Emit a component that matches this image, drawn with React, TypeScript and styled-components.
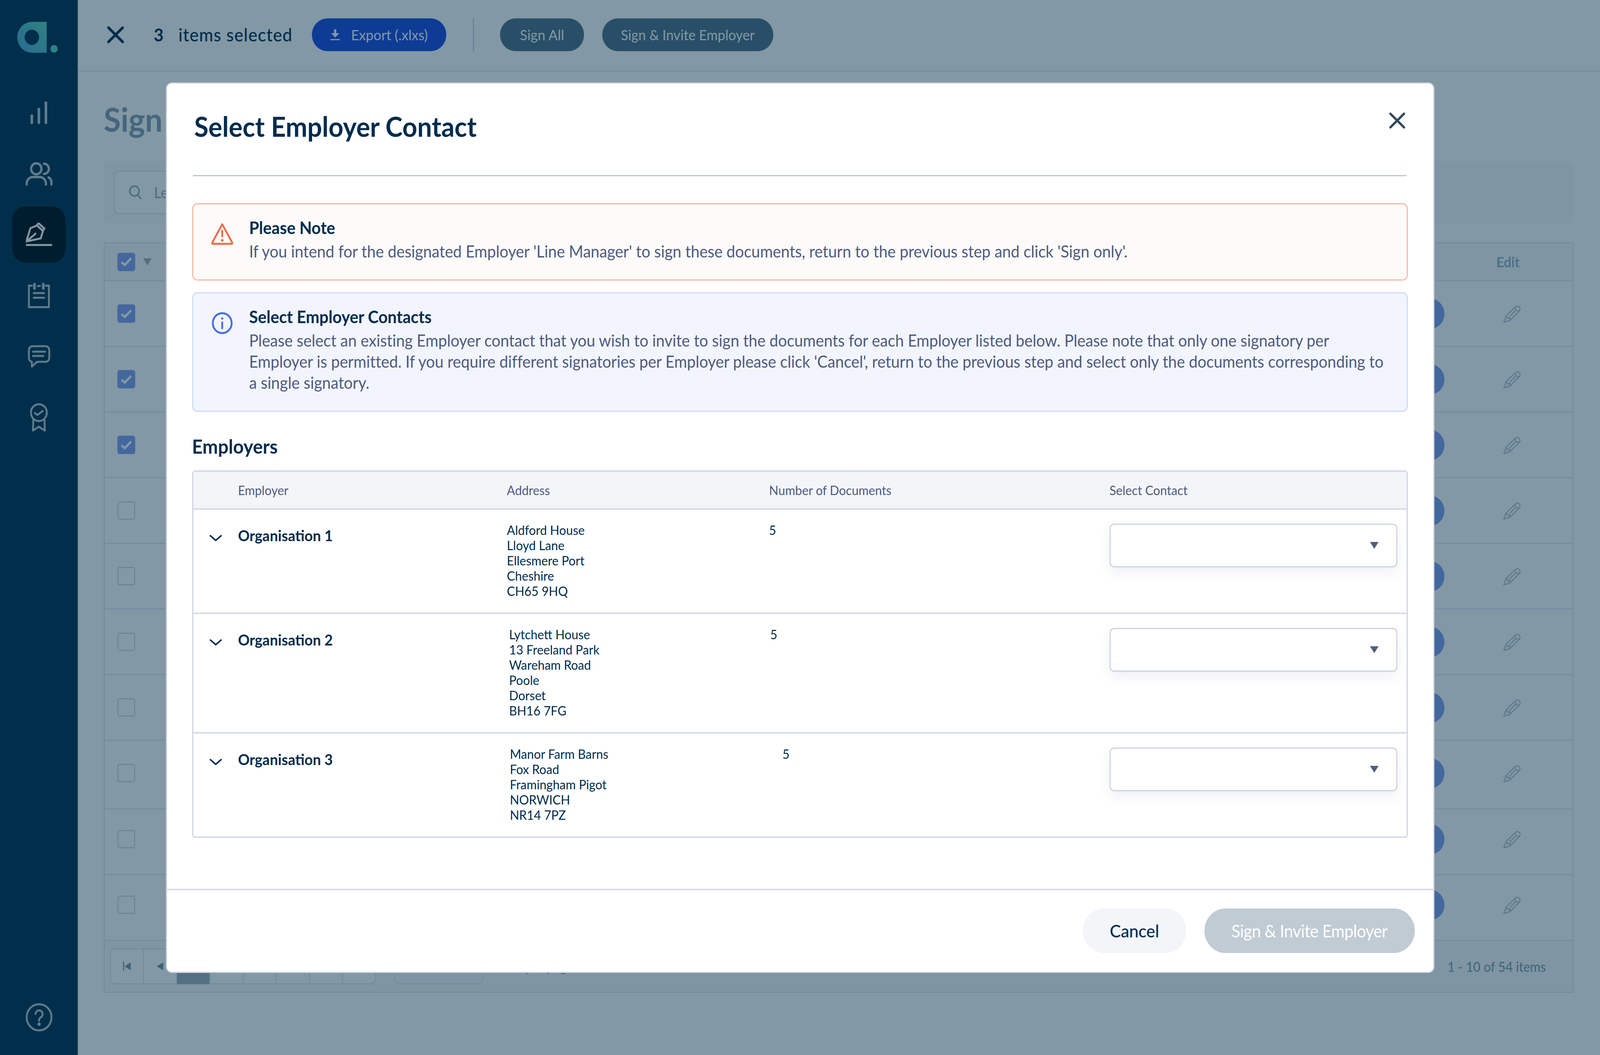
import React, { useLayoutEffect, useState } from "react";
import styled, { createGlobalStyle } from "styled-components";

const ink = "#002c4d";
const slate = "#4e5a7e";
const line = "#cdd3e3";
const shade = "#e2eaf3";
const faint = "#b8c4d3";
const sans = `Lato, "Noto Sans", sans-serif`;

const GlobalStyle = createGlobalStyle`
    html, body {
        margin: 0;
        padding: 0;
        overflow: hidden;
        background: #ffffff;
        font-family: ${sans};
    }
    * {
        box-sizing: border-box;
    }
`;

const Page = styled.div`
    position: relative;
    display: flex;
    width: 4320px;
    height: 2700px;
    overflow: hidden;
    background: #ffffff;
    transform-origin: 0 0;
`;

const Sidebar = styled.aside`
    display: flex;
    flex-direction: column;
    align-items: center;
    flex: 0 0 210px;
    background: #033250;
    padding: 56px 0 60px;
`;

const Logo = styled.svg`
    width: 111px;
    height: 79px;
    margin: 0 0 81px -8px;
`;

const NavList = styled.nav`
    display: flex;
    flex-direction: column;
    gap: 12px;
`;

const NavItem = styled.div<{ $active?: boolean }>`
    display: flex;
    align-items: center;
    justify-content: center;
    width: 144px;
    height: 144px;
    border-radius: 36px;
    color: ${(props) => (props.$active ? "#ffffff" : "#bac8d1")};
    background: ${(props) => (props.$active ? "#000e15" : "transparent")};
`;

const HelpIcon = styled.svg`
    width: 73px;
    height: 73px;
    margin-top: auto;
    color: #bac8d1;
`;

const Main = styled.main`
    display: flex;
    flex-direction: column;
    flex: 1;
    min-width: 0;
`;

const Topbar = styled.header`
    display: flex;
    align-items: center;
    height: 183px;
    padding: 0 0 3px 79px;
    border-bottom: 3px solid ${shade};
`;

const BarClose = styled.svg`
    width: 46px;
    height: 44px;
    margin-right: 80px;
    color: ${ink};
`;

const Count = styled.span`
    font-size: 46px;
    font-weight: 700;
    color: ${ink};
    margin-right: 40px;
`;

const Selected = styled.span`
    font-size: 46px;
    font-weight: 500;
    letter-spacing: 1.3px;
    color: ${ink};
    margin-right: 52px;
`;

const BarButton = styled.button<{ $primary?: boolean; $width: number }>`
    display: flex;
    align-items: center;
    justify-content: center;
    gap: 30px;
    width: ${(props) => props.$width}px;
    height: 84px;
    border: 0;
    border-radius: 42px;
    font-family: ${sans};
    font-size: 37px;
    color: #ffffff;
    background: ${(props) => (props.$primary ? "#1c4ce0" : "#507085")};
`;

const BarDivider = styled.span`
    width: 3px;
    height: 84px;
    margin: 0 70px 0 72px;
    background: #c6d2dd;
`;

const InviteButton = styled(BarButton)`
    margin-left: 49px;
    font-size: 36.4px;
`;

const Content = styled.div`
    display: flex;
    flex-direction: column;
    padding: 72px 71px 0 70px;
`;

const PageTitle = styled.h1`
    margin: 0 0 58px;
    font-size: 84px;
    line-height: 100px;
    font-weight: 700;
    color: #8a9eb1;
`;

const FilterCard = styled.div`
    height: 158px;
    padding: 23px 27px;
    margin-bottom: 49px;
    background: #f9fafc;
    border-radius: 10px;
`;

const SearchBox = styled.div`
    display: flex;
    align-items: center;
    gap: 34px;
    width: 1400px;
    height: 112px;
    padding-left: 38px;
    border: 3px solid ${shade};
    border-radius: 14px;
    background: #ffffff;
    font-size: 38px;
    color: #9aaab7;
`;

const BackTable = styled.section`
    display: flex;
    flex-direction: column;
    border: 3px solid ${shade};
`;

const BackHead = styled.div`
    display: flex;
    align-items: center;
    height: 97px;
    padding: 0 143px 0 34px;
    background: #f9fafc;
    border-bottom: 3px solid ${shade};
`;

const HeadCaret = styled.span`
    width: 24px;
    height: 19px;
    margin-left: 21px;
    background: #a6aebd;
    clip-path: polygon(0 0, 100% 0, 50% 100%);
`;

const EditLabel = styled.span`
    margin-left: auto;
    font-size: 36px;
    font-weight: 700;
    color: #9ab0c7;
`;

const BackRow = styled.div<{ $height: number; $lift: number }>`
    display: flex;
    align-items: center;
    height: ${(props) => props.$height}px;
    padding: 0 140px ${(props) => props.$lift}px 34px;
    border-bottom: 3px solid ${shade};
`;

const CheckBox = styled.span<{ $checked?: boolean }>`
    display: flex;
    align-items: center;
    justify-content: center;
    width: 48px;
    height: 47px;
    border-radius: 6px;
    color: #ffffff;
    background: ${(props) => (props.$checked ? "#86a0f1" : "transparent")};
    border: ${(props) => (props.$checked ? "0" : `3px solid #d4dae3`)};
`;

const Avatar = styled.span`
    width: 78px;
    height: 78px;
    margin-left: auto;
    margin-right: 159px;
    border-radius: 50%;
    background: #86a0f1;
`;

const Pencil = styled.svg`
    width: 47px;
    height: 46px;
    color: ${faint};
`;

const BackFooter = styled.div`
    display: flex;
    align-items: center;
    height: 130px;
    padding: 0 72px 0 13px;
    background: #f9fafc;
`;

const Pager = styled.div`
    display: flex;
    width: 720px;
    height: 92px;
    border: 3px solid ${shade};
    border-radius: 14px;
    background: #ffffff;
`;

const PagerCell = styled.span<{ $active?: boolean }>`
    display: flex;
    align-items: center;
    justify-content: center;
    flex: 1;
    margin: ${(props) => (props.$active ? "-3px 0" : "0")};
    border-right: 3px solid ${shade};
    background: ${(props) => (props.$active ? "#a6aebd" : "transparent")};
    color: #7a94a5;
    &:last-child {
        border-right: 0;
    }
`;

const SizeBox = styled.div`
    width: 241px;
    height: 92px;
    margin: 0 24px 0 48px;
    border: 3px solid ${shade};
    border-radius: 14px;
`;

const PerPage = styled.span`
    font-size: 34px;
    color: #7e94a5;
`;

const ItemTotal = styled.span`
    margin-left: auto;
    font-size: 34px;
    color: #7e94a5;
`;

const Overlay = styled.div`
    position: absolute;
    inset: 0;
    display: flex;
    align-items: center;
    justify-content: center;
    background: rgba(0, 44, 72, 0.49);
`;

const Modal = styled.div`
    display: flex;
    flex-direction: column;
    width: 3425px;
    height: 2279px;
    background: #ffffff;
    border: 3px solid ${line};
    border-radius: 16px;
`;

const ModalHeader = styled.div`
    display: flex;
    justify-content: space-between;
    align-items: flex-start;
    height: 237px;
    margin: 0 73px 0 70px;
    padding: 67px 3px 0 0;
    border-bottom: 3px solid #b9c6d3;
`;

const ModalTitle = styled.h2`
    margin: 0 0 0 4px;
    font-size: 70px;
    line-height: 84px;
    font-weight: 700;
    color: ${ink};
`;

const CloseIcon = styled.svg`
    width: 43px;
    height: 41px;
    margin-top: 7px;
    color: #33495a;
`;

const ModalBody = styled.div`
    display: flex;
    flex-direction: column;
    padding: 69px 69px 0 68px;
`;

const Alert = styled.div<{ $tone: "warn" | "info" }>`
    display: flex;
    align-items: flex-start;
    gap: 43px;
    padding: 31px 48px 0;
    border: 3px solid ${(props) => (props.$tone === "warn" ? "#f6b8a5" : "#cfdaf5")};
    border-radius: 14px;
    background: ${(props) => (props.$tone === "warn" ? "#fdfbf9" : "#f2f5fe")};
    height: ${(props) => (props.$tone === "warn" ? 198 : 306)}px;
    margin-bottom: 30px;
`;

const AlertIcon = styled.svg`
    flex: 0 0 60px;
    height: 56px;
    margin-top: 17px;
`;

const AlertText = styled.div`
    display: flex;
    flex-direction: column;
`;

const AlertTitle = styled.strong`
    font-size: 43.5px;
    line-height: 56px;
    font-weight: 700;
    color: ${ink};
`;

const AlertBody = styled.p`
    margin: 6px 0 0;
    font-size: 42px;
    line-height: 54px;
    letter-spacing: -0.08px;
    color: ${slate};
`;

const SectionTitle = styled.h3`
    margin: 28px 0 32px;
    font-size: 50px;
    line-height: 60px;
    font-weight: 700;
    color: ${ink};
`;

const EmployerTable = styled.div`
    display: flex;
    flex-direction: column;
    border: 3px solid ${line};
    border-radius: 8px;
`;

const columns = "121px 726px 708px 919px 1fr";

const EmployerHead = styled.div`
    display: grid;
    grid-template-columns: ${columns};
    align-items: center;
    height: 97px;
    background: #f3f5f9;
    border-bottom: 3px solid ${line};
    font-size: 33px;
    color: ${slate};
`;

const EmployerRow = styled.div`
    display: grid;
    grid-template-columns: ${columns};
    align-items: start;
    padding: 33px 0 36px;
    border-bottom: 3px solid ${line};
    &:last-child {
        border-bottom: 0;
    }
`;

const Chevron = styled.svg`
    width: 35px;
    height: 18px;
    margin: 31px 0 0 43px;
    color: ${ink};
`;

const OrgName = styled.div`
    margin-top: 9px;
    font-size: 39px;
    line-height: 48px;
    font-weight: 700;
    color: ${ink};
`;

const Address = styled.div<{ $offset: number }>`
    padding-left: ${(props) => props.$offset}px;
    font-size: 33px;
    line-height: 39px;
    color: ${ink};
`;

const DocCount = styled.div<{ $offset: number }>`
    padding-left: ${(props) => props.$offset}px;
    font-size: 33px;
    line-height: 39px;
    color: ${ink};
`;

const ContactSelect = styled.div`
    display: flex;
    align-items: center;
    justify-content: flex-end;
    width: 777px;
    height: 112px;
    margin-top: 3px;
    padding-right: 47px;
    background: #ffffff;
    border: 3px solid ${line};
    border-radius: 12px;
    box-shadow: 0 14px 30px rgba(60, 80, 130, 0.08);
`;

const SelectCaret = styled.span`
    width: 24px;
    height: 18px;
    background: #4e5f7e;
    clip-path: polygon(0 0, 100% 0, 50% 100%);
`;

const ModalFooter = styled.div`
    display: flex;
    align-items: center;
    justify-content: flex-end;
    gap: 49px;
    height: 212px;
    margin-top: auto;
    padding-right: 50px;
    border-top: 3px solid ${line};
`;

const FooterButton = styled.button<{ $disabled?: boolean; $width: number }>`
    width: ${(props) => props.$width}px;
    height: 114px;
    border: 0;
    border-radius: 57px;
    font-family: ${sans};
    font-size: ${(props) => (props.$disabled ? 44 : 45)}px;
    letter-spacing: ${(props) => (props.$disabled ? "-0.7px" : "0")};
    font-weight: ${(props) => (props.$disabled ? 400 : 500)};
    color: ${(props) => (props.$disabled ? "#ffffff" : ink)};
    background: ${(props) => (props.$disabled ? "#c0cbd4" : "#f3f5f9")};
`;

const organisations = [
    { name: "Organisation 1", lines: ["Aldford House", "Lloyd Lane", "Ellesmere Port", "Cheshire", "CH65 9HQ"], addressOffset: 0, docsOffset: 0 },
    { name: "Organisation 2", lines: ["Lytchett House", "13 Freeland Park", "Wareham Road", "Poole", "Dorset", "BH16 7FG"], addressOffset: 6, docsOffset: 3 },
    { name: "Organisation 3", lines: ["Manor Farm Barns", "Fox Road", "Framingham Pigot", "NORWICH", "NR14 7PZ"], addressOffset: 8, docsOffset: 36 },
];

// the last rows of the page behind sit a little lower than the rest
const backRows = [
    { checked: true, height: 168, lift: 0 },
    { checked: true, height: 168, lift: 0 },
    { checked: true, height: 168, lift: 0 },
    { checked: false, height: 168, lift: 0 },
    { checked: false, height: 168, lift: 0 },
    { checked: false, height: 168, lift: 0 },
    { checked: false, height: 168, lift: 0 },
    { checked: false, height: 176, lift: 8 },
    { checked: false, height: 168, lift: 14 },
    { checked: false, height: 168, lift: 14 },
];

// the design is 4320x2700, fit it to whatever window we actually get
const useFitToWindow = () => {
    const [fit, setFit] = useState({ x: 1, y: 1 });
    useLayoutEffect(() => {
        const measure = () => setFit({ x: window.innerWidth / 4320, y: window.innerHeight / 2700 });
        measure();
        window.addEventListener("resize", measure);
        return () => window.removeEventListener("resize", measure);
    }, []);
    return fit;
};

const Tick = () => (
    <svg width="30" height="24" viewBox="0 0 30 24" fill="none" stroke="currentColor" strokeWidth="6">
        <path d="M2 13 L11 20 L28 3" />
    </svg>
);

const PencilGlyph = () => (
    <Pencil viewBox="0 0 47 46" fill="none" stroke="currentColor" strokeWidth="3" strokeLinejoin="round">
        <path d="M8 28 L33 5 a7.5 7.5 0 0 1 10.5 10.5 L18 40 L1 45 Z" />
        <path d="M33 5 a7.5 7.5 0 0 0 10 10" strokeWidth="2.5" />
        <path d="M17 30 L35 13" />
        <path d="M8 28 L12 35 L18 33 L18 40" />
    </Pencil>
);

const App = () => {
    const fit = useFitToWindow();
    return (
        <>
            <GlobalStyle />
            <Page style={{ transform: `scale(${fit.x}, ${fit.y})` }}>
                <Sidebar>
                    <Logo viewBox="0 0 111 79">
                        <defs>
                            <linearGradient id="logoFill" x1="0" y1="1" x2="1" y2="0">
                                <stop offset="0" stopColor="#52a4d4" />
                                <stop offset="1" stopColor="#5cd5bc" />
                            </linearGradient>
                        </defs>
                        <path
                            fill="url(#logoFill)"
                            fillRule="evenodd"
                            d="M40 0 H80 V79 H40 A39.5 39.5 0 0 1 40 0 Z M40 20 A19.5 19.5 0 1 0 40.01 20 Z"
                        />
                        <circle cx="100" cy="69" r="9.7" fill="#5cd5bc" />
                    </Logo>
                    <NavList>
                        <NavItem>
                            <svg width="46" height="59" viewBox="0 0 46 59" fill="none" stroke="currentColor" strokeWidth="7" strokeLinecap="round">
                                <path d="M4 55 V37 M23 55 V20 M42 55 V4" />
                            </svg>
                        </NavItem>
                        <NavItem>
                            <svg width="73" height="61" viewBox="0 0 73 61" fill="none" stroke="currentColor" strokeWidth="6" strokeLinecap="round">
                                <circle cx="29" cy="18" r="14" />
                                <path d="M50 5 a13 13 0 0 1 0 26" />
                                <path d="M3 58 V55 a17 17 0 0 1 17 -16 h18 a17 17 0 0 1 17 16 v3" />
                                <path d="M62 40 a12 14 0 0 1 8 15 v3" />
                            </svg>
                        </NavItem>
                        <NavItem $active>
                            <svg width="71" height="60" viewBox="0 0 71 60" fill="none" stroke="currentColor" strokeWidth="5" strokeLinejoin="round" strokeLinecap="round">
                                <path d="M1 48 L12 14 L30 7 L46 21 L40 40 Z" />
                                <path d="M29 7 L34 1 L50 15 L45 21" />
                                <path d="M1 48 L26 28" />
                                <path d="M2 57 H69" />
                            </svg>
                        </NavItem>
                        <NavItem>
                            <svg width="60" height="65" viewBox="0 0 60 65" fill="none" stroke="currentColor" strokeWidth="5">
                                <path d="M13 7 H3 V62 H57 V7 H47" />
                                <path d="M18 3 V14 M42 3 V14" strokeWidth="7" strokeLinecap="round" />
                                <path d="M27 8 H33 M16 26 H44 M16 38 H44" strokeLinecap="round" />
                            </svg>
                        </NavItem>
                        <NavItem>
                            <svg width="61" height="58" viewBox="0 0 61 58" fill="none" stroke="currentColor" strokeWidth="5" strokeLinejoin="round" strokeLinecap="round">
                                <path d="M13 3 H48 a10 10 0 0 1 10 10 V33 a10 10 0 0 1 -10 10 H25 L11 55 V43 a10 10 0 0 1 -8 -10 V13 a10 10 0 0 1 10 -10 Z" />
                                <path d="M14 17 H47 M14 28 H42" />
                            </svg>
                        </NavItem>
                        <NavItem>
                            <svg width="48" height="72" viewBox="0 0 48 72" fill="none" stroke="currentColor" strokeWidth="5" strokeLinejoin="round" strokeLinecap="round">
                                <circle cx="24" cy="24" r="21.5" />
                                <path d="M13 25 L20 30 L34 20" />
                                <path d="M9 42 L8 70 L24 60 L40 70 L39 42" />
                            </svg>
                        </NavItem>
                    </NavList>
                    <HelpIcon viewBox="0 0 73 73" fill="none" stroke="currentColor" strokeWidth="5" strokeLinecap="round">
                        <circle cx="36.5" cy="36.5" r="33.5" />
                        <path d="M27 28 a9.5 9.5 0 1 1 15 8 c-3.5 2.5 -5.5 4 -5.5 9" />
                        <circle cx="36.5" cy="54" r="2" fill="currentColor" />
                    </HelpIcon>
                </Sidebar>
                <Main>
                    <Topbar>
                        <BarClose viewBox="0 0 46 44" fill="none" stroke="currentColor" strokeWidth="7" strokeLinecap="round">
                            <path d="M4 4 L42 40 M42 4 L4 40" />
                        </BarClose>
                        <Count>3</Count>
                        <Selected>items selected</Selected>
                        <BarButton $primary $width={363}>
                            <svg width="26" height="28" viewBox="0 0 26 28" fill="currentColor">
                                <path d="M10 0 H16 V10 H24 L13 21 L2 10 H10 Z M0 25 H26 V28 H0 Z" />
                            </svg>
                            Export (.xlxs)
                        </BarButton>
                        <BarDivider />
                        <BarButton $width={227}>Sign All</BarButton>
                        <InviteButton $width={462}>Sign &amp; Invite Employer</InviteButton>
                    </Topbar>
                    <Content>
                        <PageTitle>Sign</PageTitle>
                        <FilterCard>
                            <SearchBox>
                                <svg width="34" height="36" viewBox="0 0 34 36" fill="none" stroke="currentColor" strokeWidth="4" strokeLinecap="round">
                                    <circle cx="15" cy="15" r="12.5" />
                                    <path d="M24 25 L32 34" />
                                </svg>
                                Le
                            </SearchBox>
                        </FilterCard>
                        <BackTable>
                            <BackHead>
                                <CheckBox $checked><Tick /></CheckBox>
                                <HeadCaret />
                                <EditLabel>Edit</EditLabel>
                            </BackHead>
                            {backRows.map((row, i) => (
                                <BackRow key={i} $height={row.height} $lift={row.lift}>
                                    <CheckBox $checked={row.checked}>{row.checked ? <Tick /> : null}</CheckBox>
                                    <Avatar />
                                    <PencilGlyph />
                                </BackRow>
                            ))}
                            <BackFooter>
                                <Pager>
                                    <PagerCell>
                                        <svg width="21" height="24" viewBox="0 0 21 24" fill="currentColor">
                                            <path d="M0 0 H3 V24 H0 Z M21 2 V22 L4 12 Z" />
                                        </svg>
                                    </PagerCell>
                                    <PagerCell>
                                        <svg width="18" height="20" viewBox="0 0 18 20" fill="currentColor">
                                            <path d="M18 0 V20 L0 10 Z" />
                                        </svg>
                                    </PagerCell>
                                    <PagerCell $active />
                                    <PagerCell />
                                    <PagerCell />
                                    <PagerCell />
                                    <PagerCell />
                                    <PagerCell />
                                </Pager>
                                <SizeBox />
                                <PerPage>items per page</PerPage>
                                <ItemTotal>1 - 10 of 54 items</ItemTotal>
                            </BackFooter>
                        </BackTable>
                    </Content>
                </Main>
                <Overlay>
                    <Modal>
                        <ModalHeader>
                            <ModalTitle>Select Employer Contact</ModalTitle>
                            <CloseIcon viewBox="0 0 43 41" fill="none" stroke="currentColor" strokeWidth="6" strokeLinecap="round">
                                <path d="M3 3 L40 38 M40 3 L3 38" />
                            </CloseIcon>
                        </ModalHeader>
                        <ModalBody>
                            <Alert $tone="warn">
                                <AlertIcon viewBox="0 0 60 56" fill="none" stroke="#ea6f4b" strokeWidth="5" strokeLinecap="round" strokeLinejoin="round">
                                    <path d="M30 3 L57 50 Q58 53 55 53 H5 Q2 53 3 50 Z" />
                                    <path d="M30 19 V34" />
                                    <circle cx="30" cy="44" r="2" fill="#ea6f4b" strokeWidth="3" />
                                </AlertIcon>
                                <AlertText>
                                    <AlertTitle>Please Note</AlertTitle>
                                    <AlertBody>
                                        If you intend for the designated Employer 'Line Manager' to sign these documents, return to the previous step and click 'Sign only'.
                                    </AlertBody>
                                </AlertText>
                            </Alert>
                            <Alert $tone="info">
                                <AlertIcon viewBox="0 0 60 56" fill="none" stroke="#4a6ee0" strokeWidth="5" strokeLinecap="round">
                                    <circle cx="30" cy="28" r="25.5" />
                                    <path d="M30 26 V41" />
                                    <circle cx="30" cy="16" r="1.5" fill="#4a6ee0" strokeWidth="3" />
                                </AlertIcon>
                                <AlertText>
                                    <AlertTitle>Select Employer Contacts</AlertTitle>
                                    <AlertBody>
                                        Please select an existing Employer contact that you wish to invite to sign the documents for each Employer listed below. Please note that only one signatory per<br />
                                        Employer is permitted. If you require different signatories per Employer please click 'Cancel', return to the previous step and select only the documents corresponding to<br />
                                        a single signatory.
                                    </AlertBody>
                                </AlertText>
                            </Alert>
                            <SectionTitle>Employers</SectionTitle>
                            <EmployerTable>
                                <EmployerHead>
                                    <span />
                                    <span>Employer</span>
                                    <span>Address</span>
                                    <span>Number of Documents</span>
                                    <span>Select Contact</span>
                                </EmployerHead>
                                {organisations.map((org) => (
                                    <EmployerRow key={org.name}>
                                        <Chevron viewBox="0 0 35 18" fill="none" stroke="currentColor" strokeWidth="4" strokeLinecap="round" strokeLinejoin="round">
                                            <path d="M3 3 L17.5 15 L32 3" />
                                        </Chevron>
                                        <OrgName>{org.name}</OrgName>
                                        <Address $offset={org.addressOffset}>
                                            {org.lines.map((text) => (
                                                <div key={text}>{text}</div>
                                            ))}
                                        </Address>
                                        <DocCount $offset={org.docsOffset}>5</DocCount>
                                        <ContactSelect>
                                            <SelectCaret />
                                        </ContactSelect>
                                    </EmployerRow>
                                ))}
                            </EmployerTable>
                        </ModalBody>
                        <ModalFooter>
                            <FooterButton $width={279}>Cancel</FooterButton>
                            <FooterButton $disabled $width={568}>Sign &amp; Invite Employer</FooterButton>
                        </ModalFooter>
                    </Modal>
                </Overlay>
            </Page>
        </>
    );
};

export default App;
